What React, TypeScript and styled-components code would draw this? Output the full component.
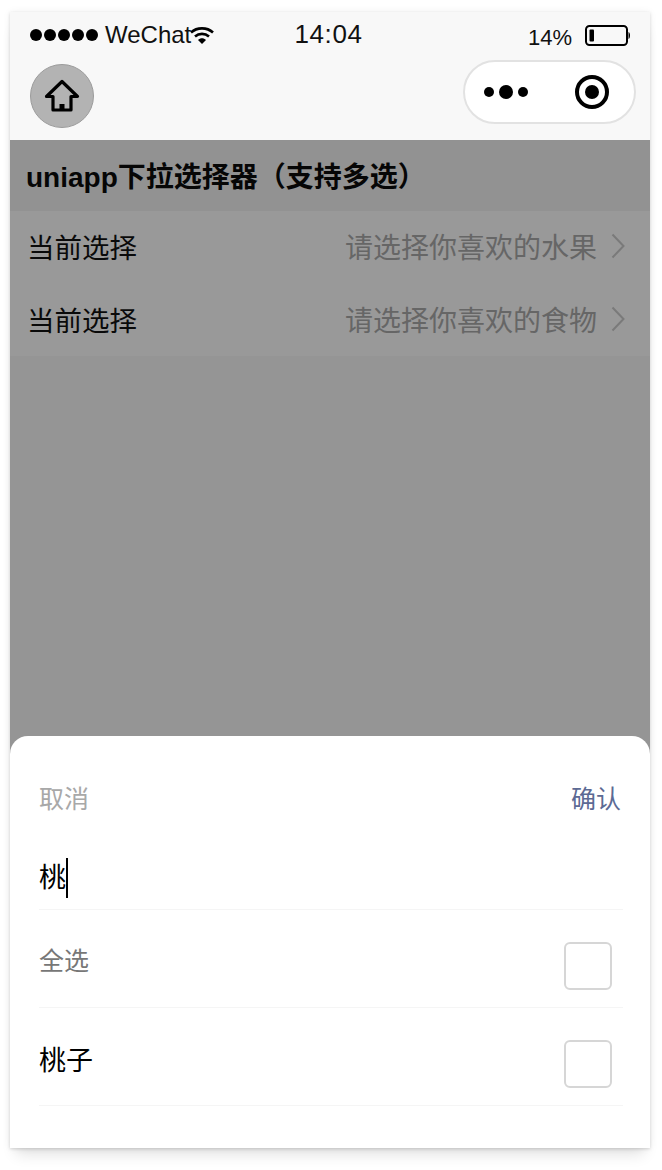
import { createGlobalStyle } from "styled-components";
import styled from "styled-components";

const GlobalStyle = createGlobalStyle`
  html, body {
    margin: 0;
    padding: 0;
    background: #ffffff;
  }
  body {
    font-family: "Liberation Sans", "Noto Sans CJK SC", sans-serif;
  }
`;

const Page = styled.div`
  width: 662px;
  height: 1170px;
  padding: 12px 12px 22px 10px;
  box-sizing: border-box;
  overflow: hidden;
`;

const Phone = styled.div`
  height: 1136px;
  display: flex;
  flex-direction: column;
  background: #959595;
  box-shadow:
    0 0 8px rgba(0, 0, 0, 0.06),
    0 1px 3px rgba(0, 0, 0, 0.14),
    0 12px 14px -6px rgba(0, 0, 0, 0.12);
`;

const TopBar = styled.div`
  height: 128px;
  flex: none;
  background: #f8f8f8;
  display: flex;
  flex-direction: column;
`;

const StatusBar = styled.div`
  height: 44px;
  padding: 2px 19px 0 20px;
  box-sizing: border-box;
  display: grid;
  grid-template-columns: 1fr auto 1fr;
  align-items: center;
  color: #111;
`;

const StatusLeft = styled.div`
  display: flex;
  align-items: center;
  font-size: 24px;
`;

const Signal = styled.div`
  display: flex;
  gap: 2px;
  margin-right: 7px;
`;

const SignalDot = styled.span`
  width: 12px;
  height: 12px;
  border-radius: 50%;
  background: #000;
`;

const Clock = styled.div`
  font-size: 26px;
  letter-spacing: 0.6px;
  margin: -1px 0 0 -4px;
`;

const StatusRight = styled.div`
  display: flex;
  justify-content: flex-end;
  align-items: center;
  gap: 13px;
  font-size: 22px;
`;

const StatusPercent = styled.span`
  margin-top: 5px;
`;

const NavBar = styled.div`
  flex: 1;
  padding: 8px 14px 12px 20px;
  display: flex;
  justify-content: space-between;
  align-items: center;
`;

const HomeButton = styled.div`
  width: 64px;
  height: 64px;
  box-sizing: border-box;
  border-radius: 50%;
  background: #b3b3b3;
  border: 1px solid #9c9c9c;
  display: flex;
  align-items: center;
  justify-content: center;
`;

const Capsule = styled.div`
  width: 173px;
  height: 64px;
  margin-top: -8px;
  box-sizing: border-box;
  border-radius: 32px;
  background: #fff;
  border: 2px solid #e2e2e2;
  display: flex;
  align-items: center;
  justify-content: space-between;
  padding: 0 25px 0 19px;
`;

const MoreDots = styled.div`
  display: flex;
  align-items: center;
  gap: 5px;
`;

const MoreDot = styled.span<{ $size: number }>`
  width: ${(p) => p.$size}px;
  height: ${(p) => p.$size}px;
  border-radius: 50%;
  background: #000;
`;

const Target = styled.div`
  width: 34px;
  height: 34px;
  box-sizing: border-box;
  border: 4px solid #000;
  border-radius: 50%;
  display: flex;
  align-items: center;
  justify-content: center;
`;

const TargetCenter = styled.span`
  width: 14px;
  height: 14px;
  border-radius: 50%;
  background: #000;
`;

const Content = styled.div`
  flex: 1;
  display: flex;
  flex-direction: column;
`;

const Title = styled.div`
  height: 71px;
  padding: 0 0 2px 16px;
  box-sizing: border-box;
  display: flex;
  align-items: center;
  font-size: 28px;
  font-weight: 700;
  color: #060606;
  background: #929292;
`;

const RowList = styled.div`
  background: #999999;
`;

const Row = styled.div`
  height: 72.5px;
  padding: 0 25px 2px 17px;
  box-sizing: border-box;
  display: flex;
  align-items: center;
  justify-content: space-between;
  font-size: 27.5px;
  color: #0a0a0a;
`;

const RowValue = styled.div`
  display: flex;
  align-items: center;
  gap: 14px;
  font-size: 28px;
  color: #666666;
`;

const Sheet = styled.div`
  height: 412px;
  flex: none;
  box-sizing: border-box;
  background: #fff;
  border-radius: 18px 18px 0 0;
  padding: 0 27px 0 29px;
`;

const SheetHeader = styled.div`
  height: 125px;
  padding: 45px 2px 0 0;
  box-sizing: border-box;
  display: flex;
  justify-content: space-between;
  align-items: flex-start;
  font-size: 25px;
  line-height: 36px;
`;

const HeaderAction = styled.span<{ $confirm?: boolean }>`
  color: ${(p) => (p.$confirm ? "#5c6a94" : "#a8a8a8")};
`;

const SearchLine = styled.div`
  height: 49px;
  box-sizing: border-box;
  border-bottom: 1px solid #f5f5f5;
  display: flex;
  align-items: flex-start;
  font-size: 27px;
  line-height: 34px;
  color: #000;
`;

const Caret = styled.span`
  width: 2px;
  height: 40px;
  margin: -3px 0 0 0;
  background: #000;
`;

const OptionRow = styled.div`
  height: 98px;
  box-sizing: border-box;
  border-bottom: 1px solid #f5f5f5;
  display: flex;
  align-items: center;
  justify-content: space-between;
  padding-right: 11px;
`;

const OptionLabel = styled.span<{ $muted?: boolean }>`
  font-size: ${(p) => (p.$muted ? 25 : 27)}px;
  color: ${(p) => (p.$muted ? "#777" : "#000")};
  margin-top: ${(p) => (p.$muted ? 0 : 4)}px;
`;

const Checkbox = styled.span`
  width: 48px;
  height: 48px;
  margin-top: 14px;
  box-sizing: border-box;
  border: 2px solid #d6d6d6;
  border-radius: 6px;
`;

const ChevronRight = () => (
  <svg width="14" height="26" viewBox="0 0 14 26" fill="none">
    <path d="M1.5 1.5 L12.5 13 L1.5 24.5" stroke="#7a7a7a" strokeWidth="2" />
  </svg>
);

const WifiIcon = () => (
  <svg width="24" height="18" viewBox="0 0 24 18" fill="none" style={{ marginLeft: -1 }}>
    <path d="M1 6.5 C7 1 17 1 23 6.5" stroke="#000" strokeWidth="2.6" />
    <path d="M5 10.5 C9 7 15 7 19 10.5" stroke="#000" strokeWidth="2.6" />
    <path d="M8 14 C10.5 11.5 13.5 11.5 16 14 L12 18 Z" fill="#000" />
  </svg>
);

const BatteryIcon = () => (
  <svg width="46" height="21" viewBox="0 0 46 21" fill="none">
    <rect x="1" y="1" width="41" height="19" rx="3.5" stroke="#000" strokeWidth="2" />
    <rect x="4.5" y="4.5" width="4.5" height="12" rx="1" fill="#000" />
    <path d="M43.5 7 C45.5 7.5 45.5 13.5 43.5 14 Z" fill="#000" />
  </svg>
);

const HomeIcon = () => (
  <svg width="36" height="34" viewBox="0 0 36 34" fill="none">
    <path
      d="M18 2.5 L33.5 17.5 L27 17.5 L27 31 L9 31 L9 17.5 L2.5 17.5 Z"
      stroke="#000"
      strokeWidth="3.2"
      strokeLinejoin="round"
    />
    <rect x="15.5" y="25" width="5" height="6" fill="#000" />
  </svg>
);

function App() {
  return (
    <Page>
      <GlobalStyle />
      <Phone>
        <TopBar>
          <StatusBar>
            <StatusLeft>
              <Signal>
                {[0, 1, 2, 3, 4].map((i) => (
                  <SignalDot key={i} />
                ))}
              </Signal>
              WeChat
              <WifiIcon />
            </StatusLeft>
            <Clock>14:04</Clock>
            <StatusRight>
              <StatusPercent>14%</StatusPercent>
              <BatteryIcon />
            </StatusRight>
          </StatusBar>
          <NavBar>
            <HomeButton>
              <HomeIcon />
            </HomeButton>
            <Capsule>
              <MoreDots>
                <MoreDot $size={10} />
                <MoreDot $size={14} />
                <MoreDot $size={10} />
              </MoreDots>
              <Target>
                <TargetCenter />
              </Target>
            </Capsule>
          </NavBar>
        </TopBar>
        <Content>
          <Title>uniapp下拉选择器（支持多选）</Title>
          <RowList>
            <Row>
              <span>当前选择</span>
              <RowValue>
                请选择你喜欢的水果
                <ChevronRight />
              </RowValue>
            </Row>
            <Row>
              <span>当前选择</span>
              <RowValue>
                请选择你喜欢的食物
                <ChevronRight />
              </RowValue>
            </Row>
          </RowList>
        </Content>
        <Sheet>
          <SheetHeader>
            <HeaderAction>取消</HeaderAction>
            <HeaderAction $confirm>确认</HeaderAction>
          </SheetHeader>
          <SearchLine>
            桃
            <Caret />
          </SearchLine>
          <OptionRow>
            <OptionLabel $muted>全选</OptionLabel>
            <Checkbox />
          </OptionRow>
          <OptionRow>
            <OptionLabel>桃子</OptionLabel>
            <Checkbox />
          </OptionRow>
        </Sheet>
      </Phone>
    </Page>
  );
}

export default App;
